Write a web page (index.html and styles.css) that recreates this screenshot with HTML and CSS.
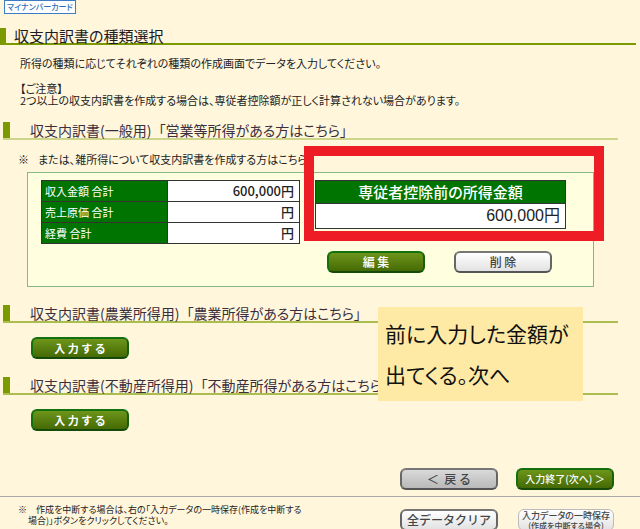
FILE: index.html
```html
<!DOCTYPE html>
<html lang="ja">
<head>
<meta charset="utf-8">
<meta name="viewport" content="width=device-width, initial-scale=1">
<title>収支内訳書の種類選択</title>
<link rel="stylesheet" href="styles.css">
</head>
<body>
<main class="page">
  <a class="badge" href="#">マイナンバーカード</a>
  <h1 class="title">収支内訳書の種類選択</h1>
  <div class="intro">
    <p>所得の種類に応じてそれぞれの種類の作成画面でデータを入力してください。</p>
    <p>【ご注意】<br>2つ以上の収支内訳書を作成する場合は、専従者控除額が正しく計算されない場合があります。</p>
  </div>

  <section class="section">
    <h2 class="heading heading-soft"><span>収支内訳書(一般用)</span><span>「営業等所得がある方はこちら」</span></h2>
    <p class="remark"><span>※</span><span>または、雑所得について収支内訳書を作成する方はこちら</span></p>
    <div class="panel">
      <table class="summary">
        <tr><th scope="row">収入金額 合計</th><td>600,000円</td></tr>
        <tr><th scope="row">売上原価 合計</th><td>円</td></tr>
        <tr><th scope="row">経費 合計</th><td>円</td></tr>
      </table>
      <div class="result">
        <table class="income">
          <tr><th scope="col">専従者控除前の所得金額</th></tr>
          <tr><td>600,000円</td></tr>
        </table>
        <div class="actions">
          <button class="btn btn-green btn-wide" type="button">編 集</button>
          <button class="btn btn-white btn-wide" type="button">削 除</button>
        </div>
      </div>
      <div class="highlight"></div>
    </div>
  </section>

  <section class="section">
    <h2 class="heading"><span>収支内訳書(農業所得用)</span><span>「農業所得がある方はこちら」</span></h2>
    <button class="btn btn-green btn-entry" type="button">入 力 す る</button>
    <aside class="note">前に入力した金額が<br>出てくる。次へ</aside>
  </section>

  <section class="section">
    <h2 class="heading"><span>収支内訳書(不動産所得用)</span><span>「不動産所得がある方はこちら」</span></h2>
    <button class="btn btn-green btn-entry" type="button">入 力 す る</button>
  </section>

  <nav class="pager">
    <button class="btn btn-gray btn-wide" type="button">＜ &nbsp;戻 る</button>
    <button class="btn btn-green" type="button">入力終了(次へ) ＞</button>
  </nav>

  <footer class="footer">
    <p class="footnote">※　作成を中断する場合は、右の「入力データの一時保存(作成を中断する<br>場合)」ボタンをクリックしてください。</p>
    <button class="btn btn-white btn-wide" type="button">全データクリア</button>
    <button class="btn btn-white btn-save" type="button">入力データの一時保存<small>(作成を中断する場合)</small></button>
  </footer>
</main>
</body>
</html>
```
FILE: styles.css
```css
* { box-sizing: border-box; }

html {
  background: #fff6dc;
  scrollbar-width: none;
}

body {
  margin: 0;
  color: #222;
  font: 12px/12px "Noto Sans CJK JP", sans-serif;
  font-feature-settings: "palt";
}

h1, h2, p { margin: 0; font-weight: 400; }

.page { overflow: hidden; }

.badge {
  display: block;
  width: max-content;
  margin-left: 4px;
  padding: 0 2px;
  border: 1px solid #3c7cc4;
  background: #fff;
  color: #2f6fba;
  font-size: 8px;
  font-weight: 500;
  line-height: 12px;
  text-decoration: none;
}

.title {
  margin: 14px 4px 0 0;
  padding-left: 14px;
  border-bottom: 2px solid #7a9a00;
  background: linear-gradient(#7a9a00, #7a9a00) 0 0 / 6px 100% no-repeat;
  font-size: 15px;
  line-height: 15px;
  color: #211a22;
}

.intro {
  display: grid;
  gap: 13px;
  margin: 12px 20px 0;
  font-size: 11px;
}

.section { position: relative; margin-top: 16px; }

.section + .section { margin-top: 18px; }

.heading {
  display: flex;
  gap: 7px;
  margin: 0 22px 0 3px;
  padding-left: 27px;
  border-bottom: 2px solid #a9be4e;
  background: linear-gradient(#7a9a00, #7a9a00) 0 0 / 7px 100% no-repeat;
  font-size: 14px;
  line-height: 16px;
  color: #3b2f3d;
}

.heading-soft { border-bottom-color: #cdd58a; }

.remark {
  display: flex;
  gap: 9px;
  margin: 13px 0 0 18px;
  font-size: 11px;
}

.panel {
  position: relative;
  display: flex;
  gap: 15px;
  margin: 7px 46px 0 27px;
  padding: 7px 27px 13px 13px;
  border: 1px solid #86b886;
  background: #ffffdf;
}

table { border-collapse: collapse; }

th, td { padding: 0 5px; border: 1px solid #333; }

th { background: #007400; color: #fff; font-weight: 400; }

td { background: #fff; text-align: right; }

.summary { flex: 259; height: 64px; }

.summary th {
  width: 49%;
  padding: 0 3px;
  font-size: 11px;
  line-height: 20px;
  text-align: left;
}

.summary td {
  font-size: 13px;
  font-weight: 500;
  line-height: 20px;
}

.result { flex: 252; }

.income { width: 100%; }

.income th { font-size: 15px; font-weight: 500; line-height: 22px; }

.income td {
  font-family: "Liberation Sans", "Noto Sans CJK JP", sans-serif;
  font-size: 16px;
  line-height: 24px;
}

.actions {
  display: flex;
  justify-content: space-between;
  margin: 22px 14px 0 12px;
}

.highlight {
  position: absolute;
  top: -27px;
  right: -11px;
  width: 300px;
  height: 95px;
  border: 10px solid #ee1c24;
}

.btn {
  display: block;
  width: 98px;
  height: 22px;
  padding: 0;
  border: 2px solid;
  border-radius: 6px;
  font: 500 10px/16px "Noto Sans CJK JP", sans-serif;
  white-space: nowrap;
}

.btn-green {
  border-color: #13700f #17600b #164a08 #13700f;
  background: linear-gradient(#6d951a, #456a05);
  color: #fff;
}

.btn-white {
  border-color: #777 #666 #555;
  background: linear-gradient(#fff, #e2e2e2);
  color: #444;
}

.btn-gray {
  border-color: #777 #666 #555;
  background: linear-gradient(#d9d9d9, #b9b9b9);
  color: #444;
}

.btn-wide { font-size: 12px; }

.btn-entry {
  margin: 14px 0 0 31px;
  font-size: 11px;
  font-weight: 700;
}

.note {
  position: absolute;
  top: 2px;
  left: 378px;
  z-index: 1;
  padding: 6px 14px 6px 7px;
  background: #feeaa5;
  color: #111;
  font-size: 21px;
  line-height: 41px;
}

.pager {
  display: flex;
  justify-content: flex-end;
  gap: 18px;
  margin: 37px 26px 6px;
}

.footer {
  display: flex;
  align-items: start;
  gap: 20px;
  padding: 7px 26px 0 18px;
  border-top: 1px solid #aaa;
}

.footnote {
  margin-right: auto;
  padding-left: 10px;
  text-indent: -10px;
  font-size: 9px;
  line-height: 11px;
}

.footer .btn { margin-top: 5px; }

.footer .btn-save {
  width: 96px;
  height: 22px;
  border: 1px solid #bbb;
  font-size: 9px;
  font-feature-settings: "palt";
  line-height: 10px;
}

.btn-save small { display: block; font-size: 8px; line-height: 9px; }
```
